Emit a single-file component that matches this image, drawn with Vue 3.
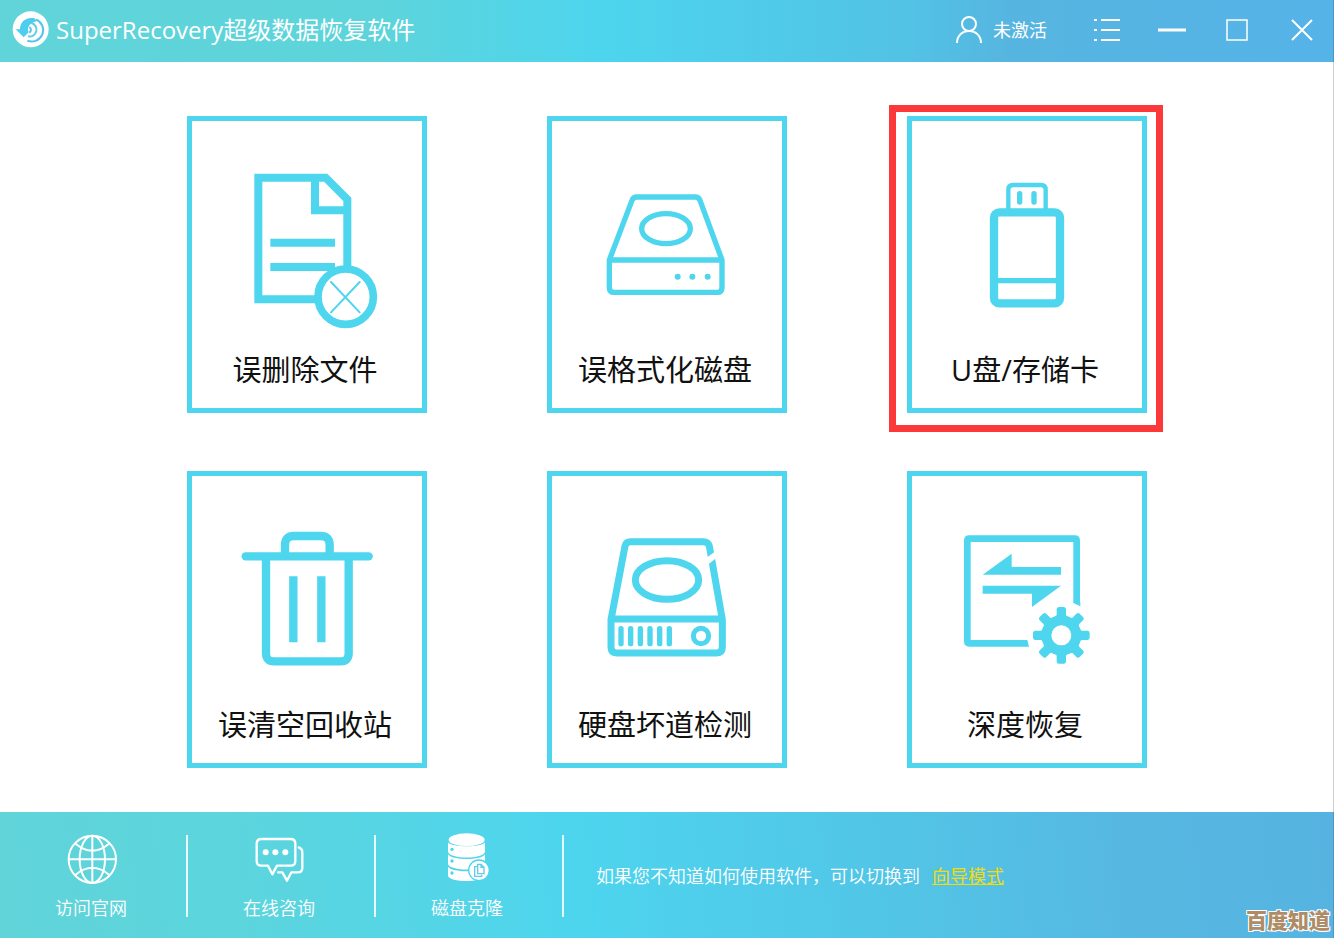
<template>
	<div class="window">
		<header class="titlebar">
			<div class="brand">
				<svg class="logo" viewBox="36 33 114 114" aria-hidden="true">
					<circle cx="92" cy="88" r="54" fill="#fff" />
					<path d="M104 55C76 50 60 67 60 88H47L71 112L86 97C80 84 86 70 110 64Z" fill="#4dcdf0" />
					<path d="M108 58A33 33 0 1 1 82 122" fill="none" stroke="#54c4ea" stroke-width="6" />
					<path d="M94 69A20 20 0 1 1 84 109" fill="none" stroke="#62cdea" stroke-width="6" />
					<path d="M88 81A10 10 0 0 1 88 98" fill="none" stroke="#54c4ea" stroke-width="6" />
				</svg>
				<h1>SuperRecovery超级数据恢复软件</h1>
			</div>
			<button class="account" type="button">
				<svg viewBox="0 0 26 30" aria-hidden="true">
					<circle cx="13" cy="9" r="7" />
					<path d="M1 28C1 21 6 16 13 16S25 21 25 28" />
				</svg>
				未激活
			</button>
			<div class="controls">
				<button type="button" aria-label="菜单">
					<svg viewBox="0 0 28 28" aria-hidden="true">
						<path d="M1 4H4M8 4H27M1 14H4M8 14H27M1 24H4M8 24H27" />
					</svg>
				</button>
				<button type="button" aria-label="最小化">
					<svg viewBox="0 0 28 28" aria-hidden="true">
						<path d="M0 14H28" stroke-width="3" />
					</svg>
				</button>
				<button type="button" aria-label="最大化">
					<svg viewBox="0 0 28 28" aria-hidden="true">
						<rect x="4" y="4" width="20" height="20" stroke-width="1.5" />
					</svg>
				</button>
				<button type="button" aria-label="关闭">
					<svg viewBox="0 0 28 28" aria-hidden="true">
						<path d="M4 4L24 24M24 4L4 24" />
					</svg>
				</button>
			</div>
		</header>

		<main class="modes">
			<button
				v-for="mode in modes"
				:key="mode.icon"
				class="card"
				:class="{ marked: mode.icon === marked }"
				type="button"
			>
				<svg v-if="mode.icon === 'file'" viewBox="141 168 480 510" aria-hidden="true">
					<path d="M405 568H235V203H437L502 268V470M405 203V301H502M271 398H465M271 471H465" stroke-width="24" />
					<circle cx="497" cy="560" r="83" fill="#fff" stroke-width="23" />
					<path d="M453 516L539 607M539 516L453 607" stroke-width="6" stroke-linecap="round" />
				</svg>
				<svg v-else-if="mode.icon === 'disk'" viewBox="141 168 480 510" stroke-width="16" aria-hidden="true">
					<path d="M208 450L276 271Q280 261 290 261H466Q476 261 480 271L546 450V533Q546 547 532 547H222Q208 547 208 533ZH546" stroke-linejoin="round" />
					<ellipse cx="378" cy="356" rx="73" ry="45" />
					<g fill="#4dd6ee" stroke="none">
						<circle cx="413" cy="500" r="9" />
						<circle cx="457" cy="500" r="9" />
						<circle cx="503" cy="500" r="9" />
					</g>
				</svg>
				<svg v-else-if="mode.icon === 'usb'" viewBox="201 213 480 510" aria-hidden="true">
					<path d="M385 350V284Q385 270 399 270H483Q497 270 497 284V350" stroke-width="13" />
					<path d="M419 296V321M462 296V321" stroke-width="16" stroke-linecap="round" />
					<rect x="342" y="352" width="198" height="273" rx="16" stroke-width="25" />
					<path d="M354 557H528" stroke-width="16" />
				</svg>
				<svg v-else-if="mode.icon === 'trash'" viewBox="141 168 480 510" stroke-width="25" aria-hidden="true">
					<path d="M197 274H566" stroke-linecap="round" />
					<path d="M315 270V240Q315 213 342 213H422Q449 213 449 240V270" />
					<path d="M258 280V565Q258 589 282 589H482Q506 589 506 565V280M340 334V532M424 334V532" />
				</svg>
				<svg v-else-if="mode.icon === 'scan'" viewBox="141 168 480 510" stroke-width="21" aria-hidden="true">
					<path d="M213 464L255 243Q258 230 271 230H490Q504 230 508 243L547 464V547Q547 564 530 564H230Q213 564 213 547ZM213 462H547" stroke-linejoin="round" />
					<path d="M490 285L536 252V273L500 302Z" fill="#fff" stroke="none" />
					<ellipse cx="381" cy="345" rx="95" ry="58" />
					<path d="M243 491V536M272 491V536M301 491V536M330 491V536M359 491V536M388 491V536" stroke-width="16" stroke-linecap="round" />
					<circle cx="483" cy="513" r="23" stroke-width="15" />
				</svg>
				<svg v-else viewBox="141 168 480 510" aria-hidden="true">
					<path d="M378 535H208Q202 535 202 529V227Q202 221 208 221H524Q530 221 530 227V413" stroke-width="20" />
					<path d="M520 410V414L541 424V410ZM376 525H382L387 545H376Z" fill="#4dd6ee" stroke="none" />
					<path d="M248 329L335 266V306H483V329ZM483 362L396 426V386H248V362Z" fill="#4dd6ee" stroke="none" />
					<circle cx="484" cy="511" r="45" stroke-width="30" />
					<path
						v-for="n in 8"
						:key="n"
						d="M460 464L470 450V432Q471 426 477 426H491Q497 426 498 432V450L508 464Z"
						:transform="`rotate(${n * 45} 484 511)`"
						fill="#4dd6ee"
						stroke="none"
					/>
				</svg>
				<span>{{ mode.label }}</span>
			</button>
		</main>

		<footer class="bottombar">
			<nav>
				<a href="#">
					<svg viewBox="198 90 150 150" stroke-width="6" aria-hidden="true">
						<circle cx="277" cy="163" r="71" />
						<ellipse cx="277" cy="163" rx="38" ry="71" />
						<path d="M206 163H348M277 92V234M225 115Q277 160 329 115M225 211Q277 166 329 211" />
					</svg>
					访问官网
				</a>
				<a href="#">
					<svg viewBox="762 90 150 150" stroke-width="7" stroke-linejoin="round" aria-hidden="true">
						<path d="M784 102H872Q886 102 886 116V168Q886 182 872 182H831L817 208L804 182H784Q770 182 770 168V116Q770 102 784 102Z" />
						<path d="M896 127Q907 131 907 142V188Q907 202 893 202H874L861 227L847 202H834" stroke-linecap="round" />
						<g fill="#fff" stroke="none">
							<circle cx="797" cy="142" r="9" />
							<circle cx="826" cy="142" r="9" />
							<circle cx="856" cy="142" r="9" />
						</g>
					</svg>
					在线咨询
				</a>
				<a href="#">
					<svg viewBox="306 90 150 150" aria-hidden="true">
						<g fill="#fff" stroke="none">
							<ellipse cx="380" cy="104" rx="54" ry="19" />
							<path d="M324 112C334 128 426 128 435 112V140C432 163 328 163 324 140Z" />
							<path d="M324 148C334 167 426 167 435 148V177C432 199 328 199 324 177Z" />
							<path d="M324 185C334 203 426 203 435 185V212C430 233 328 233 324 212Z" />
						</g>
						<g fill="#4dd5ee" stroke="none">
							<circle cx="336" cy="133" r="5" />
							<circle cx="336" cy="168" r="5" />
							<circle cx="336" cy="204" r="5" />
						</g>
						<circle cx="417" cy="196" r="31" fill="#fff" stroke="#4dd5ee" stroke-width="4" />
						<path d="M413 178H423L432 187V206H413ZM423 178V187H432M411 185H404V214H425V209" stroke="#62cbe8" stroke-width="4" />
					</svg>
					磁盘克隆
				</a>
			</nav>
			<p>如果您不知道如何使用软件，可以切换到<a href="#">向导模式</a></p>
		</footer>

		<div class="watermark">百度知道</div>
	</div>
</template>

<script setup>
import { ref } from 'vue';

const modes = [
	{ icon: 'file', label: '误删除文件' },
	{ icon: 'disk', label: '误格式化磁盘' },
	{ icon: 'usb', label: 'U盘/存储卡' },
	{ icon: 'trash', label: '误清空回收站' },
	{ icon: 'scan', label: '硬盘坏道检测' },
	{ icon: 'deep', label: '深度恢复' }
];

const marked = ref('usb');
</script>

<style>
body {
	margin: 0;
}
</style>

<style scoped>
.window {
	position: relative;
	min-height: 100vh;
	display: flex;
	flex-direction: column;
	background: #fff;
	font-family: "Open Sans", "Noto Sans CJK SC", sans-serif;
}

.window::after {
	content: "";
	position: absolute;
	inset: 0 0 0 auto;
	width: 1px;
	background: rgba(40, 70, 90, 0.25);
}

button {
	border: 0;
	padding: 0;
	background: none;
	color: inherit;
	font: inherit;
	cursor: pointer;
}

svg {
	flex: none;
	fill: none;
	stroke: currentColor;
	overflow: visible;
}

.titlebar,
.bottombar {
	background: linear-gradient(84deg, #60d4d9 0%, #5cd5dd 18%, #4dd5ee 43%, #52c4e6 68%, #56b8e1 84%, #56b3e1 100%);
	color: #fff;
	display: flex;
	align-items: center;
}

.titlebar {
	box-sizing: border-box;
	height: 62px;
	padding: 0 0 2px 12px;
	background: linear-gradient(90deg, #60d4d9 0%, #5dd4db 28%, #4dd5ee 45%, #52c2e5 68%, #56b5e0 76%, #56b3e8 100%);
}

.brand {
	flex: 1;
	display: flex;
	align-items: center;
	gap: 6px;
}

.logo {
	width: 38px;
	height: 38px;
	stroke: none;
}

h1 {
	margin: 0;
	font-size: 24px;
	line-height: 32px;
	font-weight: 400;
	white-space: nowrap;
}

.account {
	display: flex;
	align-items: center;
	gap: 11px;
	margin-right: 27px;
	font-size: 18px;
	line-height: 24px;
	white-space: nowrap;
}

.account svg {
	width: 26px;
	height: 30px;
	stroke-width: 2;
}

.controls {
	display: flex;
}

.controls button {
	width: 65px;
	height: 60px;
	display: grid;
	place-items: center;
}

.controls svg {
	width: 28px;
	height: 28px;
	stroke-width: 2;
}

.modes {
	flex: 1;
	box-sizing: border-box;
	width: 100%;
	max-width: 960px;
	margin: 0 auto;
	padding: 54px 0 44px;
	display: grid;
	grid-template-columns: repeat(3, minmax(0, 1fr));
	align-content: start;
	gap: 58px 120px;
}

.card {
	position: relative;
	border: 5px solid #4dd6ee;
	padding: 45px 0 18px;
	display: flex;
	flex-direction: column;
	align-items: center;
	gap: 14px;
	color: #111;
	font-size: 29px;
	line-height: 40px;
	font-weight: 400;
}

.card svg {
	width: 160px;
	height: 170px;
	stroke: #4dd6ee;
}

.card span {
	padding-right: 4px;
}

.card.marked::after {
	content: "";
	position: absolute;
	inset: -16px -21px -24px -23px;
	border: 7px solid #fc3838;
}

.bottombar {
	padding: 23px 0 21px;
	font-size: 18px;
}

nav {
	display: flex;
}

nav a {
	box-sizing: border-box;
	width: 188px;
	padding-right: 4px;
	border-right: 2px solid rgba(255, 255, 255, 0.85);
	display: flex;
	flex-direction: column;
	align-items: center;
	gap: 14px;
	color: #fff;
	line-height: 18px;
	text-decoration: none;
}

nav svg {
	width: 50px;
	height: 50px;
}

.bottombar nav,
.bottombar p {
	font-weight: 350;
}

.bottombar p {
	margin: 0 0 0 32px;
	line-height: 24px;
}

.bottombar p a {
	margin-left: 12px;
	color: #f0dc10;
	font-weight: 400;
	text-decoration: underline;
}

.watermark {
	position: absolute;
	right: 4px;
	bottom: 6px;
	color: #b08c66;
	font-size: 21px;
	line-height: 24px;
	font-weight: 900;
	text-shadow: 1px 1px #fff, -1px 1px #fff, 1px -1px #fff, -1px -1px #fff;
}
</style>
